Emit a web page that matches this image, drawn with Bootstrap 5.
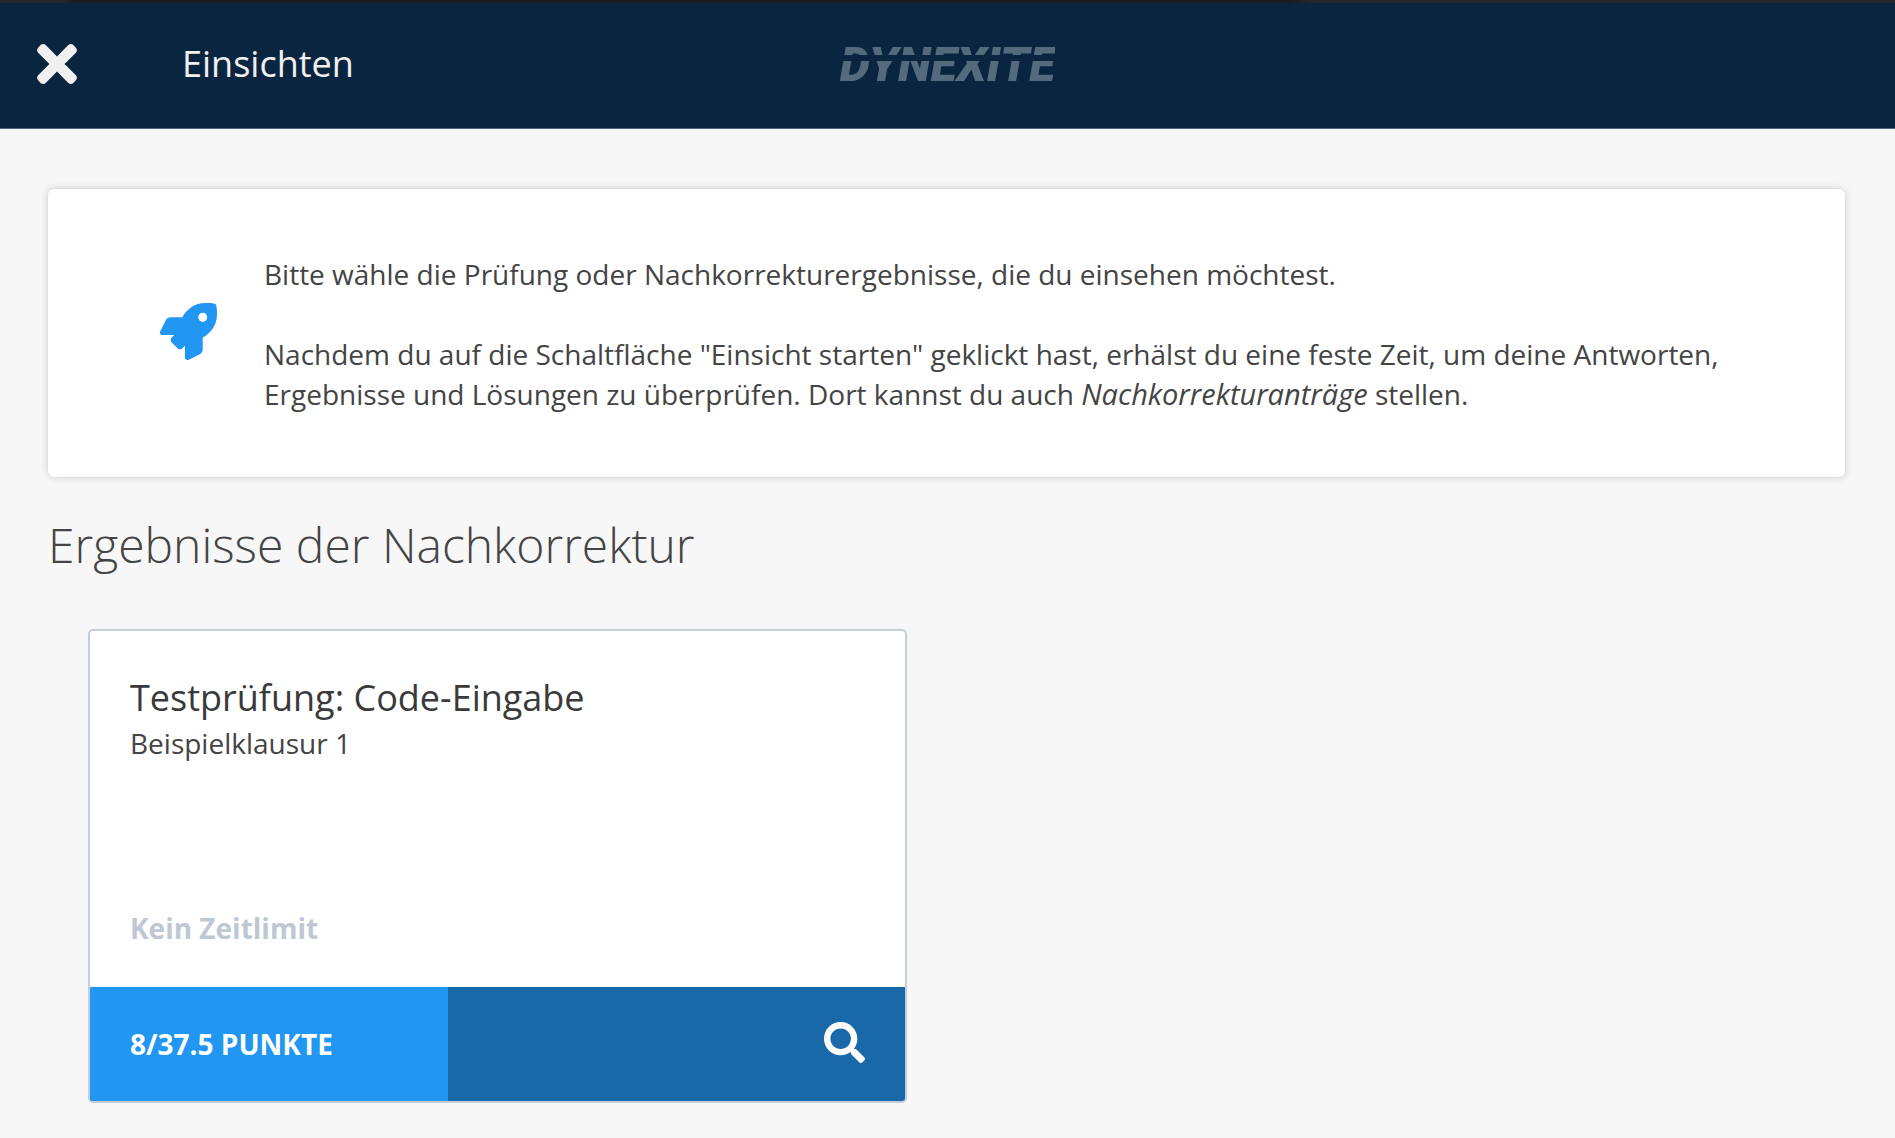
<!DOCTYPE html>
<html lang="de">
<head>
<meta charset="utf-8">
<meta name="viewport" content="width=device-width, initial-scale=1">
<title>Dynexite – Einsichten</title>
<link href="https://cdn.jsdelivr.net/npm/bootstrap@5.3.0/dist/css/bootstrap.min.css" rel="stylesheet">
<style>
  body { font-family: "Open Sans", "Noto Sans", sans-serif; font-size: 28px; line-height: 40px; color: #444; background: #f7f7f7; }
  em { font-size: 29px; line-height: 1; }
  .window-edge { height: 3px; background: linear-gradient(90deg, #272727 60px, #1c1c1c 76px, #1c1c1c 1290px, #262626 1310px); }
  .topbar { height: 126px; background: #0a2540; border-bottom: 1px solid #4f6274; color: #f0f0f0; padding: 0 28px 4px; }
  .topbar .btn-close-view { width: 58px; height: 58px; color: #f0f0f0; }
  .topbar .view-title { font-size: 36px; padding-left: 96px; }
  .brand-mark { font: italic 900 48px/64px Roboto, sans-serif; padding-top: 2px; color: transparent; text-decoration: none; background: linear-gradient(#546a7d 24px, transparent 24px, transparent 30px, #546a7d 30px); -webkit-background-clip: text; background-clip: text; }
  .page-body { padding: 60px 50px 36px 48px; }
  .info-panel { border-radius: 6px; box-shadow: 0 0 7px rgba(0,0,0,.2); padding: 65px 100px 63px 112px; gap: 47px; }
  .info-panel svg { margin-bottom: 6px; }
  .section-title { font-size: 48px; font-weight: 300; line-height: 64px; margin: 36px 0 0; color: #444; }
  .exam-col { padding: 52px 40px 0; }
  .exam-card { border: 2px solid #c5ced8; border-radius: 5px; color: #444; }
  .exam-card .card-body { padding: 42px 40px 39px; min-height: 356px; }
  .exam-name { font-size: 36px; line-height: 50px; margin: 0; font-weight: 400; color: #3a3a3a; }
  .limit { color: #bdc8d3; }
  .score-bar { height: 114px; background: #1969aa; padding: 0 40px; border-radius: 0 0 3px 3px; }
  .score-bar svg { margin-bottom: 4px; }
  .score-fill { background: #2196f3; }
</style>
</head>
<body>
<div class="window-edge"></div>
<header class="topbar row g-0 align-items-center">
  <div class="col d-flex align-items-center">
    <button type="button" class="btn btn-close-view p-0 border-0 d-flex align-items-center justify-content-center" aria-label="Schließen">
      <svg width="40" height="58" viewBox="0 0 352 512" fill="currentColor" aria-hidden="true"><path d="M242.72 256l100.07-100.07c12.28-12.28 12.28-32.19 0-44.48l-22.24-22.24c-12.28-12.28-32.19-12.28-44.48 0L176 189.28 75.93 89.21c-12.28-12.28-32.19-12.28-44.48 0L9.21 111.45c-12.28 12.28-12.28 32.19 0 44.48L109.28 256 9.21 356.07c-12.28 12.28-12.28 32.19 0 44.48l22.24 22.24c12.28 12.28 32.2 12.28 44.48 0L176 322.72l100.07 100.07c12.28 12.28 32.2 12.28 44.48 0l22.24-22.24c12.28-12.28 12.28-32.19 0-44.48L242.72 256z"/></svg>
    </button>
    <span class="view-title">Einsichten</span>
  </div>
  <a class="col-auto brand-mark" href="#">DYNEXITE</a>
  <div class="col"></div>
</header>

<main class="page-body">
  <section class="info-panel bg-white d-flex align-items-center">
    <svg class="flex-shrink-0" width="57" height="57" viewBox="0 0 512 512" fill="#2196f3" aria-hidden="true"><path d="M505.12 19.09c-1.19-5.53-6.66-11-12.21-12.18C460.72 0 435.51 0 410.41 0 307.18 0 245.27 55.2 199.05 128H94.84c-16.35.02-35.56 11.88-42.89 26.48L2.52 253.3A28.4 28.4 0 0 0 0 264a24 24 0 0 0 24 24h103.82l-22.48 22.47c-11.36 11.36-13 32.26 0 45.25l50.9 50.9c11.16 11.19 32.16 13.16 45.28 0L224 384.16V488a24 24 0 0 0 24 24 28.56 28.56 0 0 0 10.71-2.52l98.73-49.39c14.63-7.29 26.51-26.5 26.51-42.86V312.8c72.59-46.31 128.03-108.4 128.03-211.09.1-25.21.1-50.41-6.86-82.62zM384.04 168A40 40 0 1 1 424.05 128a40.02 40.02 0 0 1-40.01 40z"/></svg>
    <div>
      <p class="mb-0">Bitte wähle die Prüfung oder Nachkorrekturergebnisse, die du einsehen möchtest.</p>
      <br>
      <p class="mb-0">Nachdem du auf die Schaltfläche "Einsicht starten" geklickt hast, erhälst du eine feste Zeit, um deine Antworten, Ergebnisse und Lösungen zu überprüfen. Dort kannst du auch <em>Nachkorrekturanträge</em> stellen.</p>
    </div>
  </section>

  <h1 class="section-title">Ergebnisse der Nachkorrektur</h1>

  <div class="row g-0">
    <div class="col-6 exam-col">
      <article class="card exam-card">
        <div class="card-body d-flex flex-column">
          <h2 class="exam-name">Testprüfung: Code-Eingabe</h2>
          <div>Beispielklausur 1</div>
          <div class="limit fw-bold mt-auto">Kein Zeitlimit</div>
        </div>
        <a href="#" class="score-bar position-relative overflow-hidden d-flex align-items-center justify-content-between text-white text-decoration-none" aria-label="Einsicht öffnen">
          <span class="score-fill position-absolute top-0 start-0 h-100" style="width:44%"></span>
          <span class="position-relative fw-bold">8/37.5 PUNKTE</span>
          <svg class="position-relative" width="41" height="41" viewBox="0 0 512 512" fill="currentColor" aria-hidden="true"><path d="M505 442.7L405.3 343c-4.5-4.5-10.6-7-17-7H372c27.6-35.3 44-79.7 44-128C416 93.1 322.9 0 208 0S0 93.1 0 208s93.1 208 208 208c48.3 0 92.7-16.4 128-44v16.3c0 6.4 2.5 12.5 7 17l99.7 99.7c9.4 9.4 24.6 9.4 33.9 0l28.3-28.3c9.4-9.4 9.4-24.6.1-34zM208 336c-70.7 0-128-57.2-128-128 0-70.7 57.2-128 128-128 70.7 0 128 57.2 128 128 0 70.7-57.2 128-128 128z"/></svg>
        </a>
      </article>
    </div>
  </div>
</main>
<script src="https://cdn.jsdelivr.net/npm/bootstrap@5.3.0/dist/js/bootstrap.bundle.min.js"></script>
</body>
</html>
